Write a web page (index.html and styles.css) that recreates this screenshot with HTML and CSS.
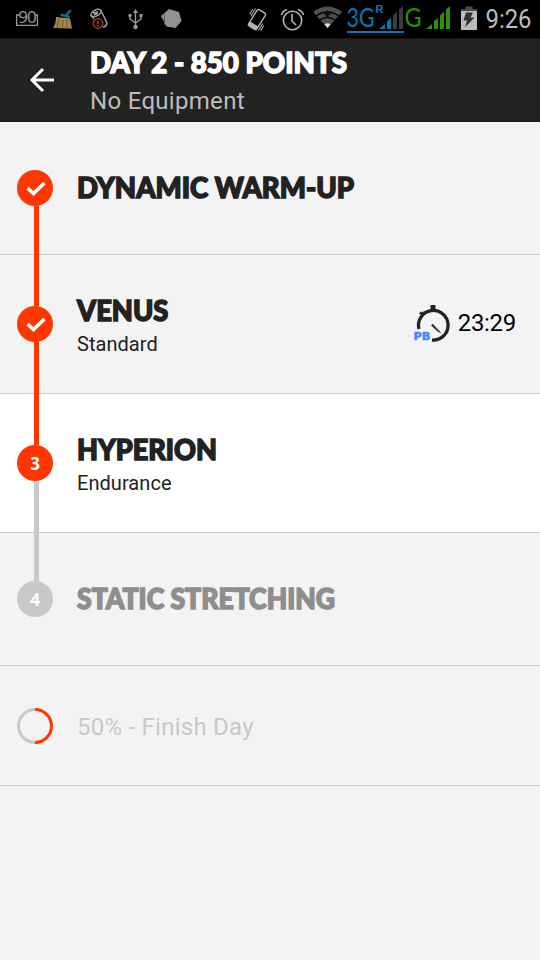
FILE: index.html
```
<!DOCTYPE html>
<html lang="en">
<head>
<meta charset="utf-8">
<title>Day 2</title>
<link rel="stylesheet" href="styles.css">
</head>
<body>
<div class="status">
  <svg width="540" height="38" viewBox="0 0 540 38">
    <g fill="none" stroke="#969696" stroke-width="1.3">
      <path d="M19 15h-2.400v10.300h20.800V15H35"/>
      <text class="st-90" x="18.300" y="22.500">90</text>
    </g>
    <path d="M69.500 9.500l2 1.500-3.500 4 2 1.500-1 2-9-3 1-2 4 1z" fill="#126997"/>
    <path d="M56 17l14 1.500 2 10-19-.5q3-4 3-11z" fill="#a28648"/>
    <path d="M59 19l-2 9M63 20l-1 9M67 20v9" stroke="#705a29" fill="none"/>
    <g fill="none" stroke="#aaa" stroke-width="1.400">
      <path d="M91 15l3 4M101 10.500l6 12.500q-1 4-4 4"/>
      <ellipse cx="96" cy="13" rx="5.500" ry="3" transform="rotate(-28 96 13)"/>
      <path d="M93 13l5-1M94 15l4-2"/>
    </g>
    <circle cx="98" cy="23.500" r="4.800" fill="#160500" stroke="#a43f25" stroke-width="1.300"/>
    <path d="M98 20.500v3.500M98 25v1.500" stroke="#b44025" stroke-width="1.600"/>
    <g fill="none" stroke="#999" stroke-width="1.400">
      <path d="M135.500 11v15M130 16v3l5.500 4 5.500-4v-3"/>
    </g>
    <g fill="#999"><path d="M133 13l2.500-4 2.500 4z"/><circle cx="135.500" cy="27" r="2.200"/><circle cx="130" cy="15.500" r="1.700"/><path d="M139.500 14h3v3h-3z"/></g>
    <path d="M161 16l8-7 10 3 2.500 9-6 7-9-1.500z" fill="#929292"/>
    <path d="M164.500 13.500v11" stroke="#555" fill="none"/>
    <g transform="rotate(32 257 19.500)" fill="none" stroke="#b4b4b4" stroke-width="1.400">
      <rect x="252.200" y="10" width="9.600" height="19" rx="1.500"/>
      <path d="M253 25.500h8v3h-8z" fill="#b4b4b4"/>
      <path d="M250 11v9M248 13v6M264 20v8M266 21v6" stroke-width="1"/>
    </g>
    <g fill="none" stroke="#b4b4b4" stroke-width="1.600">
      <circle cx="292.500" cy="20.500" r="9.200"/>
      <path d="M292 14v7l4 4M281.500 15q1-4 5.500-5.500M303.500 15q-1-4-5.500-5.500"/>
    </g>
    <path d="M313 12q14.500-11 29 0L327.500 28z" fill="#505050"/>
    <path d="M316 16q11.500-8 23 0M319.500 20q8-5 16 0" fill="none" stroke="#000" stroke-width="1.300"/>
    <path d="M324.500 24.500q3-2.500 6 0l-3 3.500z" fill="#ddd"/>
    <path d="M327.500 10l4 5h-2.500v3h-3v-3h-2.500z" fill="#111"/>
    <text class="st-net st-blue" x="346.500" y="27" textLength="28" lengthAdjust="spacingAndGlyphs">3G</text>
    <text class="st-r" x="375.500" y="13">R</text>
    <path d="M347 31h57v2h-57z" fill="#0878ad"/>
    <path d="M379 29l6-5v5zM387 29v-8l4-3v11z" fill="#0878ad"/>
    <path d="M393 29V15.500l4-4V29zM399 29V9.500l4-3.500v23z" fill="#3b3b3b"/>
    <text class="st-net st-green" x="404.500" y="27" textLength="17" lengthAdjust="spacingAndGlyphs">G</text>
    <path d="M426 29l6-5v5zM434 29v-8l4-3v11zM440 29V15.500l4-4V29zM446 29V9.500l4-3.500v23z" fill="#2b9202"/>
    <path d="M461 9h16v21h-16z" fill="#bcbcbc"/><path d="M465.500 6.500h7V9h-7zM461 9h16v2h-16z" fill="#4a4a4a"/>
    <path d="M466 12.500h7l-2.500 5h4L465 27.500l2-7h-3.500z" fill="#333"/>
    <text class="st-time" x="485.500" y="28" textLength="46" lengthAdjust="spacingAndGlyphs">9:26</text>
  </svg>
</div>
<header class="bar">
  <svg class="back" width="26" height="26" viewBox="0 0 26 26"><path d="M25 13H3M14 2L3 13l11 11" fill="none" stroke="#fff" stroke-width="3"/></svg>
  <div class="bar-text">
    <h1 class="title"><span class="fit fit-day">DAY 2 - 850 POINTS</span></h1>
    <p class="equip">No Equipment</p>
  </div>
</header>
<main>
  <section class="row short">
    <div class="rail"><i class="line none"></i><b class="badge"><svg width="20" height="16" viewBox="0 0 20 16"><path d="M1.500 8l6 5.500L18.500 3" fill="none" stroke="#fff" stroke-width="3.600"/></svg></b><i class="line"></i></div>
    <h2 class="title"><span class="fit fit-warm">DYNAMIC WARM-UP</span></h2>
  </section>
  <section class="row">
    <div class="rail"><i class="line"></i><b class="badge"><svg width="20" height="16" viewBox="0 0 20 16"><path d="M1.500 8l6 5.500L18.500 3" fill="none" stroke="#fff" stroke-width="3.600"/></svg></b><i class="line"></i></div>
    <div class="info"><h2 class="title"><span class="fit fit-venus">VENUS</span></h2><p class="sub">Standard</p></div>
    <div class="result">
      <svg width="38" height="40" viewBox="0 0 38 40">
        <path d="M5 25A14.800 14.800 0 1 1 18 36" fill="none" stroke="#222" stroke-width="3.300"/>
        <path d="M16.500 1h5v6h-5zM5 9.500l2-2 1.500 1 1.500-1.500 2 2-3.500 3.500-1.500-1.500z" fill="#222"/>
        <path d="M18.500 20l8 8.500-2.500-1-6.500-6z" fill="#222" stroke="#222" stroke-width=".6"/>
        <text class="pb" x="-.5" y="36" textLength="17" lengthAdjust="spacingAndGlyphs">PB</text>
      </svg>
      <span class="time">23:29</span>
    </div>
  </section>
  <section class="row current">
    <div class="rail"><i class="line"></i><b class="badge">3</b><i class="line grey"></i></div>
    <div class="info"><h2 class="title"><span class="fit fit-hyper">HYPERION</span></h2><p class="sub">Endurance</p></div>
  </section>
  <section class="row short">
    <div class="rail"><i class="line grey"></i><b class="badge grey">4</b><i class="line none"></i></div>
    <h2 class="title muted"><span class="fit fit-static">STATIC STRETCHING</span></h2>
  </section>
  <section class="row finish">
    <svg class="ring" width="36" height="36" viewBox="0 0 36 36" fill="none" stroke-width="3"><path d="M18 1.500a16.500 16.500 0 0 0 0 33" stroke="#c8c8c8"/><path d="M18 1.500a16.500 16.500 0 0 1 0 33" stroke="#ff3600"/></svg>
    <p class="finish-text">50% - Finish Day</p>
  </section>
</main>
</body>
</html>
```
FILE: styles.css
```
* { box-sizing: border-box; margin: 0; padding: 0; }
body { width: 540px; height: 960px; overflow: hidden; background: #f3f3f3; font-family: Roboto, sans-serif; color: #222; }
.status { height: 38px; background: #000; }
.status svg { display: block; }
.st-90 { font: 17px "Noto Sans", sans-serif; fill: #969696; stroke: none; letter-spacing: -1px; }
.st-net { font: 26.5px Lato, sans-serif; }
.st-blue { fill: #0878ad; }
.st-green { fill: #2b9202; }
.st-r { font: bold 11px "Liberation Sans", sans-serif; fill: #0878ad; }
.st-time { font: 25px Roboto, sans-serif; fill: #bebebe; }
.bar { height: 84px; background: #222; display: flex; align-items: flex-start; padding-left: 29px; border-top: 1px solid #171717; border-bottom: 1px solid #1c1c1c; }
.back { margin: 28px 35px 0 0; flex: none; }
.bar-text { padding-top: 6px; }
.title { font: 900 28.5px/34px Lato, sans-serif; white-space: nowrap; -webkit-text-stroke: 1.5px currentColor; }
.bar .title { color: #fff; }
.short .title { padding-bottom: 2px; }
.fit { display: inline-block; transform-origin: 0 50%; }
.fit-day { transform: scaleX(.97); }
.fit-warm { transform: scaleX(.967); }
.fit-venus { transform: scaleX(.957); }
.fit-hyper { transform: scaleX(.95); }
.fit-static { transform: scaleX(.932); }
.equip { font-size: 24px; line-height: 28px; margin-top: 8px; color: #bdbdbd; letter-spacing: .3px; }
.row { display: flex; align-items: center; height: 139px; border-bottom: 1px solid #c8c8c8; padding-left: 17px; }
.short { height: 133px; }
.finish { height: 120px; }
.current { background: #fff; }
.rail { width: 36px; align-self: stretch; display: flex; flex-direction: column; margin-right: 24px; flex: none; }
.line { width: 5px; margin-left: 17px; background: #ff3600; flex: 0 0 calc(50% - 18px); }
.line:last-child { flex: 1; margin-bottom: -1px; }
.line.grey, .badge.grey { background: #c8c8c8; }
.line.none { background: none; }
.badge { height: 36px; flex: none; border-radius: 50%; background: #ff3600; color: #fff; display: flex; align-items: center; justify-content: center; font: bold 17px "Open Sans", sans-serif; }
.badge svg { position: relative; left: 1px; }
.sub { font-size: 20px; line-height: 24px; margin-top: 5px; letter-spacing: .05px; }
.muted { color: #8e8e8e; }
.result { display: flex; align-items: center; margin: -2px 24px 0 auto; color: #000; }
.result svg { margin-top: 1px; }
.time { font-size: 24px; margin-left: 6px; letter-spacing: -.3px; }
.pb { font: bold 11px "DejaVu Sans", sans-serif; fill: #3a86ff; stroke: #3a86ff; stroke-width: .4px; }
.ring { margin-right: 24px; }
.finish-text { font-size: 24px; color: #c8c8c8; letter-spacing: .25px; padding-top: 2px; }
```
